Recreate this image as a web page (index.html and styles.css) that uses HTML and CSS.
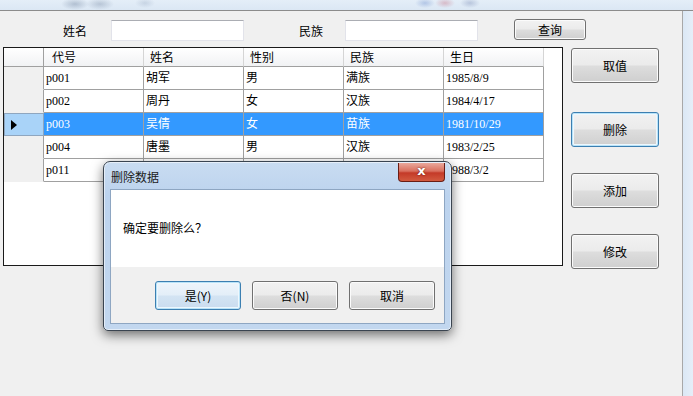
FILE: index.html
```html
<!DOCTYPE html>
<html lang="zh-CN">
<head>
    <meta charset="UTF-8">
    <title>数据管理</title>
    <link rel="stylesheet" href="styles.css">
</head>
<body>
<div class="window">
    <div class="caption"></div>
    <div class="frame">
        <div class="form">
            <!-- search bar -->
            <div class="search">
                <span class="lbl lbl-name">姓名</span>
                <input class="field" type="text">
                <span class="lbl lbl-nation">民族</span>
                <input class="field" type="text">
                <button class="btn btn-query">查询</button>
            </div>
            <div class="main">
                <div class="grid">
                    <div class="row head">
                        <div class="cell rh"></div>
                        <div class="cell hd first">代号</div>
                        <div class="cell hd">姓名</div>
                        <div class="cell hd">性别</div>
                        <div class="cell hd">民族</div>
                        <div class="cell hd">生日</div>
                    </div>
                    <div class="row">
                        <div class="cell rh"></div>
                        <div class="cell">p001</div>
                        <div class="cell">胡军</div>
                        <div class="cell">男</div>
                        <div class="cell">满族</div>
                        <div class="cell">1985/8/9</div>
                    </div>
                    <div class="row">
                        <div class="cell rh"></div>
                        <div class="cell">p002</div>
                        <div class="cell">周丹</div>
                        <div class="cell">女</div>
                        <div class="cell">汉族</div>
                        <div class="cell">1984/4/17</div>
                    </div>
                    <div class="row selected">
                        <div class="cell rh">
                            <svg class="arrow" width="6" height="10" viewBox="0 0 6 10"><path d="M0 0 L6 5 L0 10 Z" fill="#000"/></svg>
                        </div>
                        <div class="cell">p003</div>
                        <div class="cell">吴倩</div>
                        <div class="cell">女</div>
                        <div class="cell">苗族</div>
                        <div class="cell">1981/10/29</div>
                    </div>
                    <div class="row">
                        <div class="cell rh"></div>
                        <div class="cell">p004</div>
                        <div class="cell">唐墨</div>
                        <div class="cell">男</div>
                        <div class="cell">汉族</div>
                        <div class="cell">1983/2/25</div>
                    </div>
                    <div class="row">
                        <div class="cell rh"></div>
                        <div class="cell">p011</div>
                        <div class="cell"></div>
                        <div class="cell"></div>
                        <div class="cell"></div>
                        <div class="cell">1988/3/2</div>
                    </div>
                </div>
                <div class="actions">
                    <button class="btn act act-get">取值</button>
                    <button class="btn act act-del focus">删除</button>
                    <button class="btn act act-add">添加</button>
                    <button class="btn act act-edit">修改</button>
                </div>
            </div>
        </div>
        <div class="side"></div>
    </div>

    <!-- confirm dialog -->
    <div class="dialog">
        <div class="dlg-title">删除数据</div>
        <div class="dlg-close">x</div>
        <div class="dlg-client">
            <div class="dlg-msg">确定要删除么？</div>
            <div class="dlg-foot">
                <button class="btn dlg-btn focus">是(Y)</button>
                <button class="btn dlg-btn">否(N)</button>
                <button class="btn dlg-btn">取消</button>
            </div>
        </div>
    </div>
</div>
</body>
</html>
```

FILE: styles.css
```css
* {
    box-sizing: border-box;
}
body {
    margin: 0;
    font-family: "Noto Sans CJK SC", "DejaVu Sans", sans-serif;
    font-size: 12px;
    color: #000;
    background: #f0f0f0;
}
.window {
    position: relative;
    width: 693px;
    height: 396px;
    overflow: hidden;
}
/* blurred glass of the window caption */
.caption {
    height: 11px;
    border-bottom: 1px solid #8c8c8c;
    background:
        radial-gradient(ellipse 14px 6px at 75px 4px, rgba(90,110,140,.35), transparent),
        radial-gradient(ellipse 14px 6px at 100px 4px, rgba(90,110,140,.3), transparent),
        radial-gradient(ellipse 10px 5px at 145px 3px, rgba(120,140,170,.25), transparent),
        radial-gradient(ellipse 10px 5px at 425px 3px, rgba(70,110,190,.3), transparent),
        radial-gradient(ellipse 10px 5px at 445px 3px, rgba(190,70,90,.3), transparent),
        radial-gradient(ellipse 10px 5px at 470px 3px, rgba(90,110,160,.3), transparent),
        linear-gradient(#e4eef8, #dbe7f4);
}
.frame {
    display: flex;
    height: 385px;
}
.form {
    width: 683px;
    border-right: 1px solid #a8a8a8;
    background: #f0f0f0;
}
.side {
    flex: 1;
    background: linear-gradient(90deg, #dbe8f5, #e6eef8);
}

/* search bar */
.search {
    display: flex;
    align-items: flex-start;
    height: 36px;
    padding: 9px 0 0 63px;
}
.lbl {
    line-height: 21px;
    flex-shrink: 0;
}
.lbl-name {
    width: 48px;
}
.lbl-nation {
    width: 46px;
    margin-left: 55px;
}
.field {
    flex-shrink: 0;
    width: 133px;
    height: 21px;
    margin: 0;
    border: 1px solid #e2e3ea;
    border-top-color: #abadb3;
    background: #fff;
}
.btn {
    font-family: inherit;
    font-size: 12px;
    color: #000;
    padding: 0;
    margin: 0;
    border: 1px solid #707070;
    border-radius: 3px;
    background: linear-gradient(#f2f2f2 0%, #ebebeb 48%, #dddddd 52%, #cfcfcf 100%);
    box-shadow: inset 0 0 0 1px #fbfbfb;
}
.btn.focus {
    border-color: #3c7fb1;
    box-shadow: inset 0 0 0 1px #b9e3f8, inset 0 0 0 2px #eef7fd;
}
.btn-query {
    width: 72px;
    height: 21px;
    margin: -1px 0 0 36px;
}

/* grid + buttons */
.main {
    display: flex;
    gap: 8px;
    padding-left: 3px;
}
.grid {
    width: 560px;
    height: 219px;
    border: 1px solid #1a1a1a;
    background: #fff;
}
.row {
    display: grid;
    grid-template-columns: 40px repeat(5, 100px);
    height: 23px;
}
.row.head {
    height: 19px;
}
.cell {
    border-right: 1px solid #a0a0a0;
    border-bottom: 1px solid #a0a0a0;
    padding-left: 2px;
    line-height: 23px;
    font-family: "Liberation Serif", "Noto Sans CJK SC", serif;
    font-size: 12px;
    white-space: nowrap;
    overflow: hidden;
}
.cell.rh {
    background: #f0f0f0;
    border-bottom-color: #f0f0f0;
    border-right-color: #a0a0a0;
    display: flex;
    align-items: center;
    padding-left: 6px;
}
.head .cell {
    font-family: "Noto Sans CJK SC", sans-serif;
    line-height: 18px;
    border-right-color: #d5d5d5;
    border-bottom-color: #a0a0a0;
    background: linear-gradient(#ffffff, #f1f2f4);
}
.head .cell.rh {
    border-right-color: #a0a0a0;
}
.cell.hd {
    padding-left: 6px;
}
.cell.hd.first {
    padding-left: 8px;
}
.selected .cell {
    background: #3399ff;
    color: #fff;
}
.selected .cell.rh {
    background: #a9d3f8;
    border: 1px solid #8fa6bf;
}

.actions {
    display: flex;
    flex-direction: column;
    width: 88px;
}
.act {
    height: 35px;
}
.act-get {
    margin-top: 1px;
}
.act-del {
    margin-top: 29px;
}
.act-add,
.act-edit {
    margin-top: 26px;
}

/* dialog */
.dialog {
    position: absolute;
    left: 103px;
    top: 161px;
    width: 349px;
    height: 170px;
    border: 1px solid #3a4450;
    border-radius: 7px 7px 5px 5px;
    background: linear-gradient(#c9dcf1 0%, #bcd3ee 20%, #c2d7ef 100%);
    box-shadow: 0 4px 12px rgba(0, 0, 0, .55), inset 0 0 0 1px rgba(255, 255, 255, .55);
}
.dlg-title {
    height: 27px;
    padding: 9px 0 0 7px;
    line-height: 12px;
    color: #1b1b1b;
}
.dlg-close {
    position: absolute;
    top: 1px;
    right: 6px;
    width: 47px;
    height: 19px;
    border: 1px solid #6a1d14;
    border-top: none;
    border-radius: 0 0 4px 4px;
    background: linear-gradient(#e9a89c 0%, #d9705f 45%, #c43a28 55%, #d25a3f 100%);
    color: #fff;
    font-family: "DejaVu Sans", sans-serif;
    font-weight: bold;
    font-size: 13px;
    line-height: 16px;
    text-align: center;
    text-shadow: 0 0 2px #5a1008;
}
.dlg-client {
    margin: 0 6px;
    height: 135px;
    border: 1px solid #8ea6c2;
    background: #f0f0f0;
}
.dlg-msg {
    height: 77px;
    padding: 30px 0 0 12px;
    line-height: 16px;
    background: #fff;
}
.dlg-foot {
    display: flex;
    justify-content: flex-end;
    gap: 11px;
    padding: 14px 9px 0 0;
}
.dlg-btn {
    width: 86px;
    height: 29px;
}
.dlg-btn.focus {
    margin-right: 0;
    background: linear-gradient(#eef5fb 0%, #e3eef8 48%, #d3e4f3 52%, #c9dcef 100%);
}
```
